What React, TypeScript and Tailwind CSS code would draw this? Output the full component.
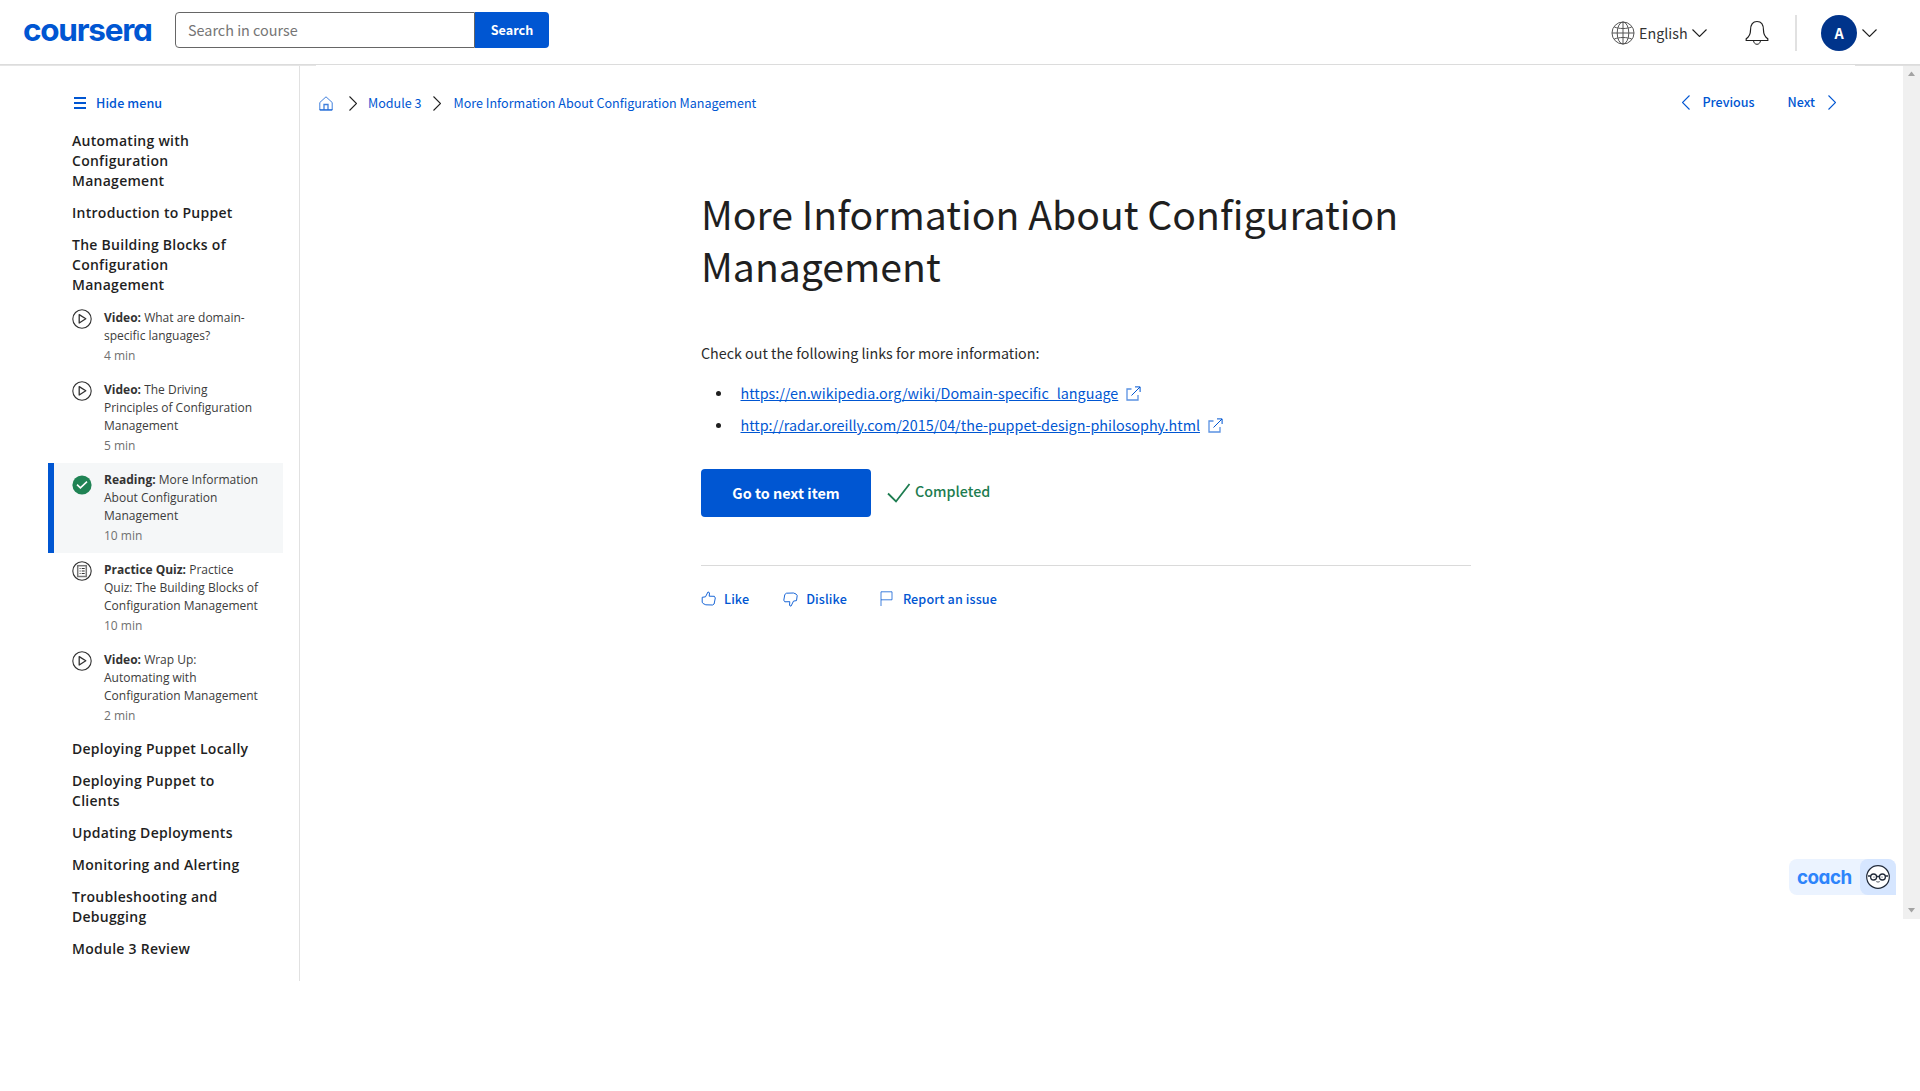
import React from "react";

const SANS = "font-['Noto_Sans_CJK_SC','Source_Sans_Pro',sans-serif]";

type Lesson = {
  kind: string;
  icon: "video" | "done" | "quiz";
  lines: string[];
  time: string;
  active?: boolean;
};

const before = [
  ["Automating with", "Configuration", "Management"],
  ["Introduction to Puppet"],
  ["The Building Blocks of", "Configuration", "Management"],
];

const after = [
  ["Deploying Puppet Locally"],
  ["Deploying Puppet to", "Clients"],
  ["Updating Deployments"],
  ["Monitoring and Alerting"],
  ["Troubleshooting and", "Debugging"],
  ["Module 3 Review"],
];

const lessons: Lesson[] = [
  { kind: "Video:", icon: "video", lines: ["What are domain-", "specific languages?"], time: "4 min" },
  { kind: "Video:", icon: "video", lines: ["The Driving", "Principles of Configuration", "Management"], time: "5 min" },
  { kind: "Reading:", icon: "done", lines: ["More Information", "About Configuration", "Management"], time: "10 min", active: true },
  { kind: "Practice Quiz:", icon: "quiz", lines: ["Practice", "Quiz: The Building Blocks of", "Configuration Management"], time: "10 min" },
  { kind: "Video:", icon: "video", lines: ["Wrap Up:", "Automating with", "Configuration Management"], time: "2 min" },
];

function Chevron({ dir, className }: { dir: "left" | "right" | "down"; className: string }) {
  const points =
    dir === "right" ? "0.5,0.5 7.5,7.5 0.5,14.5" : dir === "left" ? "7.5,0.5 0.5,7.5 7.5,14.5" : "0.5,0.5 7.5,7.5 14.5,0.5";
  const down = dir === "down";
  return (
    <svg className={className} width={down ? 15 : 8} height={down ? 8 : 15} viewBox={down ? "0 0 15 8" : "0 0 8 15"} fill="none" stroke="currentColor" strokeWidth="1.1">
      <polyline points={points} />
    </svg>
  );
}

function LessonIcon({ icon }: { icon: Lesson["icon"] }) {
  if (icon === "done") {
    return (
      <svg width="20" height="20" viewBox="0 0 20 20" className="mt-1 shrink-0">
        <circle cx="10" cy="10" r="9.6" fill="#1f8354" />
        <path d="M5 9.6l3.4 3.3L15 6.6" stroke="#fff" strokeWidth="1.5" fill="none" />
      </svg>
    );
  }
  return (
    <svg width="20" height="20" viewBox="0 0 20 20" className="shrink-0" fill="none" stroke="#333">
      <circle cx="10" cy="10" r="9.2" strokeWidth="1.1" />
      {icon === "video" ? (
        <path d="M7.2 5.6v8.4l6.6-4.2z" strokeWidth="1.3" strokeLinejoin="round" />
      ) : (
        <>
          <rect x="5.7" y="4.7" width="8.6" height="10.8" stroke="#777" strokeWidth="1.5" />
          <path d="M7.6 7.5h1M7.6 10h1M7.6 12.5h1M9.7 7.5h3M9.7 10h3M9.7 12.5h3" strokeWidth="1" />
        </>
      )}
    </svg>
  );
}

function Heading({ lines }: { lines: string[] }) {
  return (
    <div className="py-1.5 pl-6 text-sm leading-5 font-semibold tracking-[0.27px] text-[#1f1f1f]">
      {lines.map((l) => (
        <div key={l}>{l}</div>
      ))}
    </div>
  );
}

function External() {
  return (
    <svg className="ml-2 inline-block" width="15" height="15" viewBox="0 0 15 15" fill="none" stroke="#0056d2">
      <path d="M5.5 3H1v11h11V9" strokeOpacity="0.65" strokeWidth="1.3" />
      <path d="M5.5 9.5L14 1M9 .9h5.1V6" />
    </svg>
  );
}

export default function App() {
  return (
    <div className={`flex h-[1091px] w-[1920px] flex-col overflow-hidden bg-white text-[#1f1f1f] ${SANS}`}>
      <header className="relative flex h-[65px] shrink-0 border-b border-[#dcdcdc] pl-[23px]">
        <div className="mt-[14px] h-8 w-[152px] font-['Inter',sans-serif] text-[31.5px] leading-8 font-bold tracking-[-1.25px] text-[#0056d2] [font-feature-settings:'cv11']">
          coursera
        </div>
        <div className="mt-3 flex h-9">
          <div className="flex h-9 w-[300px] items-center rounded-l-[4px] border border-[#666] pl-3 text-[14.4px] leading-6 text-[#757575]">
            Search in course
          </div>
          <div className="flex w-[74px] items-center justify-center rounded-r-[4px] bg-[#0056d2] text-[12.6px] font-bold text-white">
            Search
          </div>
        </div>
        <div className="mr-[43px] ml-auto flex h-16 items-center">
          <svg className="mt-0.5" width="24" height="24" viewBox="0 0 24 24" fill="none" stroke="#555">
            <circle cx="12" cy="12" r="11" />
            <ellipse cx="12" cy="12" rx="5.8" ry="11" />
            <path d="M12 1v22M1 12h22M3.3 6c5 2 12.4 2 17.4 0M3.3 18c5-2 12.4-2 17.4 0" />
          </svg>
          <span className="mt-0.5 ml-1 w-[49px] text-[14.3px] leading-6 text-[#333]">English</span>
          <Chevron dir="down" className="mt-0.5 ml-1" />
          <svg className="mt-0.5 ml-[38px]" width="24" height="26" viewBox="0 0 24 26" fill="none" stroke="#1f1f1f">
            <path d="M1.2 20.5v-1.8c3-2 4.3-4.2 4.3-8.5C5.500 4.500 8 1.500 12 1.500s6.500 3 6.500 8.700c0 4.300 1.300 6.500 4.300 8.500v1.800z" strokeWidth="1.200" />
            <path d="M8.500 20.700c.3 2.200 1.600 3.600 3.500 3.600s3.200-1.400 3.500-3.600" />
          </svg>
          <div className="mt-0.5 ml-[26px] h-9 w-0.5 bg-[#e1e1e1]" />
          <div className="mt-0.5 ml-6 flex size-9 items-center justify-center rounded-full bg-[#00348b] text-[14.4px] font-bold text-white">A</div>
          <Chevron dir="down" className="mt-0.5 ml-[5px]" />
        </div>
        <div className="absolute top-[65px] left-0 h-px w-[316px] bg-[#e5e5e5]" />
        <div className="absolute top-[65px] right-0 z-10 h-px w-[65px] bg-[#e0e0e0]" />
      </header>

      <div className="flex min-h-0 flex-1">
        <aside className="h-[916px] w-[300px] shrink-0 border-r border-[#e1e1e1] pr-4 pl-12">
          <div className="flex h-[60px] items-center gap-2.5 pt-4 pl-[26px] text-[12.6px] font-medium tracking-[0.08px] text-[#0056d2]">
            <svg width="12" height="12" viewBox="0 0 12 12" fill="#0056d2">
              <path d="M0 0h12v2H0zM0 5h12v2H0zM0 10h12v2H0z" />
            </svg>
            <span>Hide menu</span>
          </div>
          <nav className="font-['Open_Sans',sans-serif]">
            {before.map((l) => (
              <Heading key={l[0]} lines={l} />
            ))}
            {lessons.map((s, i) => (
              <div
                key={i}
                className={
                  s.active
                    ? "flex gap-3 border-l-[6px] border-[#0056d2] bg-[#f5f7f8] py-2 pl-[18px]"
                    : "flex gap-3 py-2 pl-6"
                }
              >
                <LessonIcon icon={s.icon} />
                <div className="text-xs leading-[18px] whitespace-nowrap text-[#3c3c3c]">
                  <div>
                    <span className="font-bold text-[#333]">{s.kind}</span>{" "}
                    {s.lines.map((l, n) => (
                      <React.Fragment key={l}>
                        {n > 0 && <br />}
                        {l}
                      </React.Fragment>
                    ))}
                  </div>
                  <div className="pt-0.5 text-[#707070]">{s.time}</div>
                </div>
              </div>
            ))}
            {after.map((l) => (
              <Heading key={l[0]} lines={l} />
            ))}
          </nav>
        </aside>

        <main className="relative h-[854px] flex-1">
          <div className="flex h-[76px] items-center pl-[19px] text-[12.55px] text-[#0056d2]">
            <svg width="14" height="15" viewBox="0 0 14 15" fill="none" stroke="#0056d2" strokeOpacity="0.75">
              <path d="M.8 6.500L7 .8l6.200 5.700V14H.8z" />
              <path d="M5 14V8.500h4V14M.8 13.800h12.400" strokeWidth="1.300" />
            </svg>
            <Chevron dir="right" className="ml-4 text-[#1f1f1f]" />
            <span className="ml-[11px]">Module 3</span>
            <Chevron dir="right" className="ml-3 text-[#1f1f1f]" />
            <span className="ml-3">More Information About Configuration Management</span>
            <div className="mr-[67px] mb-0.5 ml-auto flex items-center font-medium">
              <Chevron dir="left" className="" />
              <span className="ml-[12px]">Previous</span>
              <span className="ml-[33px]">Next</span>
              <Chevron dir="right" className="ml-[13px]" />
            </div>
          </div>

          <article className="ml-[401px] w-[770px] pt-[46px]">
            <h1 className="text-[39.2px] leading-[52px] font-normal">
              More Information About Configuration
              <br />
              Management
            </h1>
            <p className="mt-[50px] text-[14.3px] leading-6 text-[#2b2b2b]">Check out the following links for more information:</p>
            <ul className="mt-3 text-[14.33px] leading-8 text-[#0056d2]">
              {["https://en.wikipedia.org/wiki/Domain-specific_language", "http://radar.oreilly.com/2015/04/the-puppet-design-philosophy.html"].map((u) => (
                <li key={u} className="flex h-8 items-center">
                  <span className="ml-[15px] size-[5px] rounded-full bg-[#1f1f1f]" />
                  <span className="ml-[19.5px] underline">{u}</span>
                  <External />
                </li>
              ))}
            </ul>
            <div className="mt-7 flex h-12 items-center">
              <div className="flex h-12 w-[170px] items-center justify-center rounded-[4px] bg-[#0056d2] text-[14.4px] font-bold text-white">
                Go to next item
              </div>
              <svg className="ml-4" width="24" height="20" viewBox="0 0 24 20" fill="none" stroke="#1d7c50" strokeWidth="1.800">
                <path d="M1 10.500l8 8L22.500 1" />
              </svg>
              <span className="mb-1 ml-1 text-[14.3px] font-medium text-[#1d7c50]">Completed</span>
            </div>
            <div className="mt-12 h-px bg-[#dadada]" />
            <div className="mt-[21px] flex h-6 items-center text-[12.6px] font-medium tracking-[0.11px] text-[#0056d2]">
              <svg className="mb-px" width="15" height="15" viewBox="0 0 15 15" fill="none" stroke="currentColor">
                <path d="M1.200 6.300L4.500 5.800 7 .9l1.500.9-.3 3.400 5.200.1.900 1.700-1.200 6-1.600 1-6.700-.2-2.600-1.200-1-1.400z" strokeLinejoin="round" strokeWidth=".9" />
              </svg>
              <span className="ml-2">Like</span>
              <svg className="ml-[34px]" width="15" height="15" viewBox="0 0 15 15" fill="none" stroke="currentColor">
                <path d="M.8 8.200L1.800 2.500 3.500 1.200l7-.2 2.500 1 1.200 1.600-.7 5-3 .5L8 14.200l-1.500-.8.3-3.700-5 .1z" strokeLinejoin="round" strokeWidth=".9" />
              </svg>
              <span className="ml-2">Dislike</span>
              <svg className="mb-px ml-[33px]" width="13" height="15" viewBox="0 0 13 15" fill="none" stroke="currentColor">
                <path d="M1 15V.8h11v8H1" strokeOpacity=".75" />
              </svg>
              <span className="ml-[10px]">Report an issue</span>
            </div>
          </article>

          <div className="absolute right-[7px] bottom-[24px] flex h-9 w-[107px] rounded-l-[8px] rounded-tr-[8px] bg-[#ebf3ff]">
            <div className="w-[71px] pt-px pl-2 font-['Inter',sans-serif] text-[18.8px] leading-9 font-bold tracking-[-0.5px] text-[#2d84fb] [font-feature-settings:'cv11']">
              coach
            </div>
            <div className="flex w-9 items-center justify-center rounded-l-[8px] rounded-tr-[8px] bg-[#d6e6ff]">
              <svg width="24" height="24" viewBox="0 0 24 24" fill="none" stroke="#222b3a">
                <circle cx="12" cy="12" r="11.300" fill="#fff" strokeWidth="1.200" />
                <circle cx="7.600" cy="12" r="3" strokeWidth="1.300" />
                <circle cx="16.400" cy="12" r="3" strokeWidth="1.300" />
                <path d="M10.600 11.500h2.800M2 11h2.600M19.400 11H22" strokeWidth="1.300" />
                <circle cx="8" cy="12" r=".6" fill="#222b3a" stroke="none" />
                <circle cx="16" cy="12" r=".6" fill="#222b3a" stroke="none" />
                <path d="M10.300 16.600q1.700 1 3.400 0" strokeWidth=".8" />
              </svg>
            </div>
          </div>
        </main>

        <div className="flex h-[854px] w-[17px] flex-col items-center justify-between bg-[#f0f0f0] py-[6px]">
          <svg width="7" height="5" viewBox="0 0 7 5" fill="#a3a3a3"><path d="M0 5L3.500.5 7 5z" /></svg>
          <svg width="7" height="5" viewBox="0 0 7 5" fill="#a3a3a3"><path d="M0 0l3.500 4.500L7 0z" /></svg>
        </div>
      </div>
    </div>
  );
}
